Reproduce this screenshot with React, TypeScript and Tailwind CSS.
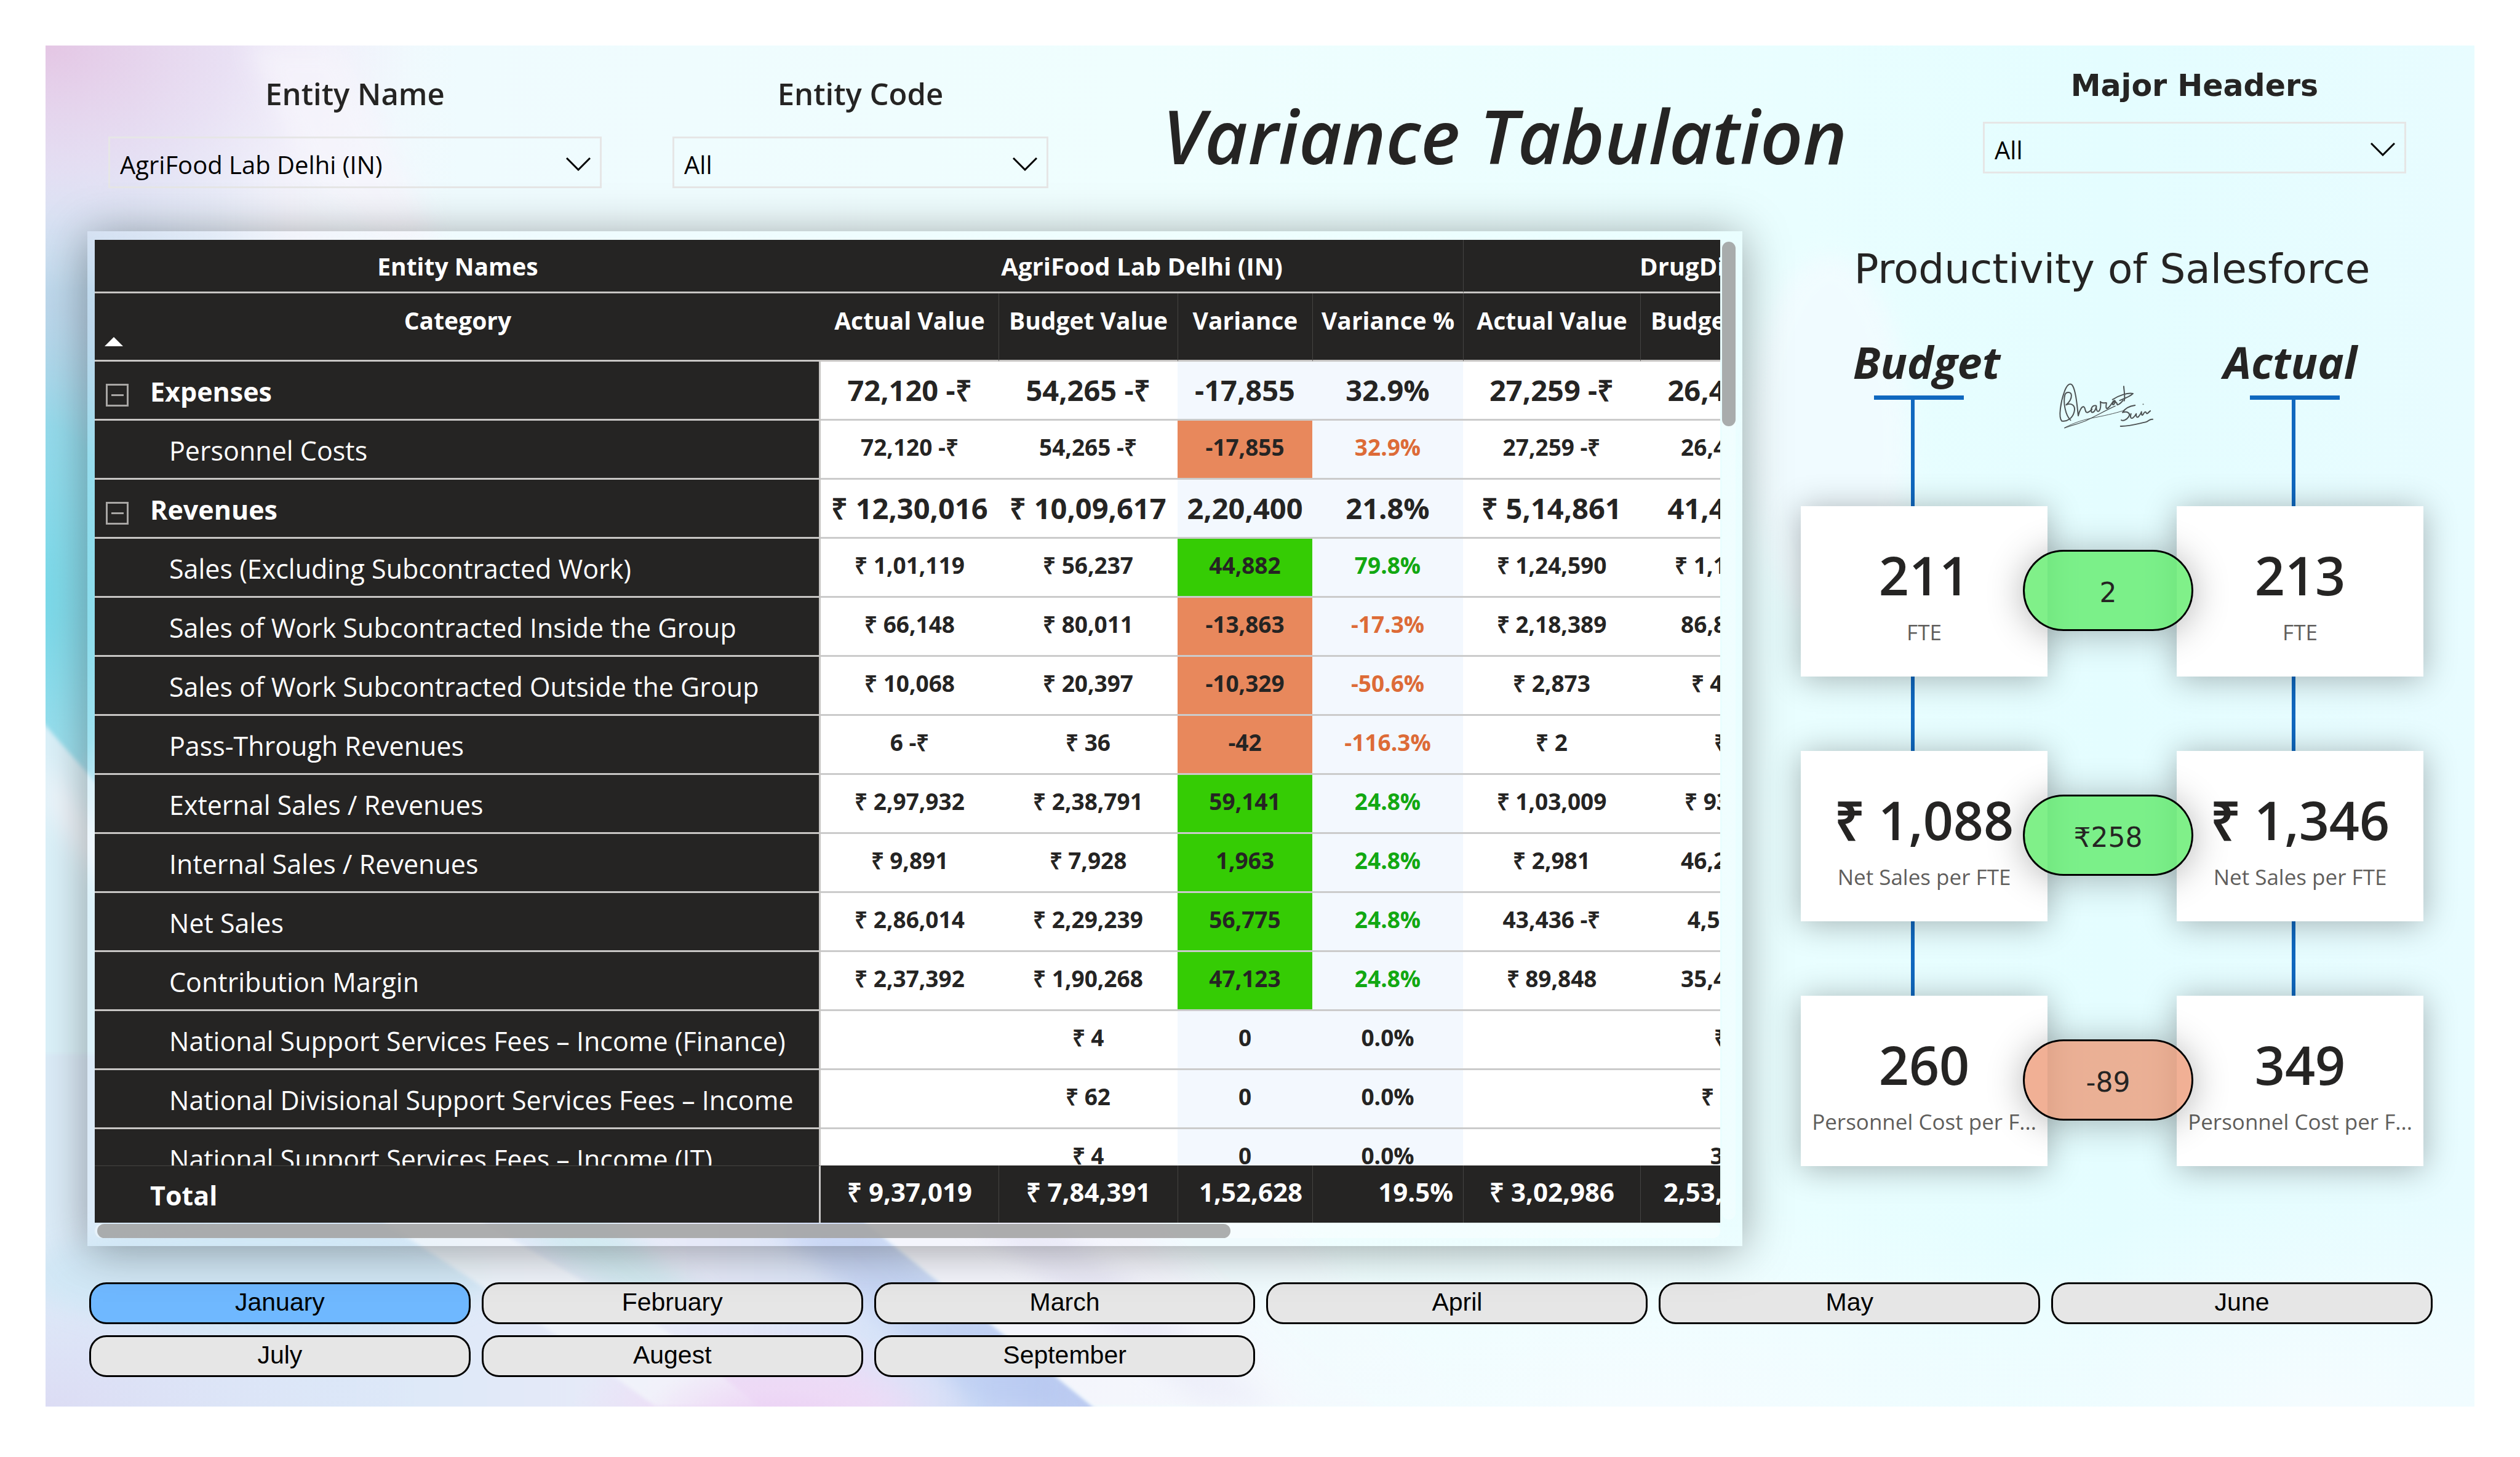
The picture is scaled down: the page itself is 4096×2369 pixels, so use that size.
import { useState } from "react";
import { clsx } from "clsx";

type Row = {
  name: string;
  group?: boolean;
  cells: string[];
  tone?: "good" | "bad";
};

const rows: Row[] = [
  { name: "Expenses", group: true, cells: ["72,120 -₹", "54,265 -₹", "-17,855", "32.9%", "27,259 -₹", "26,462 -₹"] },
  { name: "Personnel Costs", cells: ["72,120 -₹", "54,265 -₹", "-17,855", "32.9%", "27,259 -₹", "26,462 -₹"], tone: "bad" },
  { name: "Revenues", group: true, cells: ["₹ 12,30,016", "₹ 10,09,617", "2,20,400", "21.8%", "₹ 5,14,861", "41,462 -₹"] },
  { name: "Sales (Excluding Subcontracted Work)", cells: ["₹ 1,01,119", "₹ 56,237", "44,882", "79.8%", "₹ 1,24,590", "₹ 1,10,462"], tone: "good" },
  { name: "Sales of Work Subcontracted Inside the Group", cells: ["₹ 66,148", "₹ 80,011", "-13,863", "-17.3%", "₹ 2,18,389", "86,862 -₹"], tone: "bad" },
  { name: "Sales of Work Subcontracted Outside the Group", cells: ["₹ 10,068", "₹ 20,397", "-10,329", "-50.6%", "₹ 2,873", "₹ 4,162"], tone: "bad" },
  { name: "Pass-Through Revenues", cells: ["6 -₹", "₹ 36", "-42", "-116.3%", "₹ 2", "₹ 4"], tone: "bad" },
  { name: "External Sales / Revenues", cells: ["₹ 2,97,932", "₹ 2,38,791", "59,141", "24.8%", "₹ 1,03,009", "₹ 93,162"], tone: "good" },
  { name: "Internal Sales / Revenues", cells: ["₹ 9,891", "₹ 7,928", "1,963", "24.8%", "₹ 2,981", "46,262 -₹"], tone: "good" },
  { name: "Net Sales", cells: ["₹ 2,86,014", "₹ 2,29,239", "56,775", "24.8%", "43,436 -₹", "4,562 -₹"], tone: "good" },
  { name: "Contribution Margin", cells: ["₹ 2,37,392", "₹ 1,90,268", "47,123", "24.8%", "₹ 89,848", "35,462 -₹"], tone: "good" },
  { name: "National Support Services Fees – Income (Finance)", cells: ["", "₹ 4", "0", "0.0%", "", "₹ 4"] },
  { name: "National Divisional Support Services Fees – Income", cells: ["", "₹ 62", "0", "0.0%", "", "₹ 236"] },
  { name: "National Support Services Fees – Income (IT)", cells: ["", "₹ 4", "0", "0.0%", "", "3 -₹"] },
];

const totals = ["₹ 9,37,019", "₹ 7,84,391", "1,52,628", "19.5%", "₹ 3,02,986", "2,53,462 -₹"];
const columns = ["Actual Value", "Budget Value", "Variance", "Variance %", "Actual Value", "Budget Value"];
const months = ["January", "February", "March", "April", "May", "June", "July", "Augest", "September"];

const metrics = [
  { label: "FTE", budget: "211", actual: "213", diff: "2", good: true },
  { label: "Net Sales per FTE", budget: "₹ 1,088", actual: "₹ 1,346", diff: "₹258", good: true },
  { label: "Personnel Cost per F...", budget: "260", actual: "349", diff: "-89", good: false },
];

function Wallpaper() {
  return (
    <svg aria-hidden="true" className="absolute inset-0 h-full w-full" viewBox="0 0 3948 2213" preserveAspectRatio="none">
      <defs>
        <linearGradient id="base" x1="0" y1="0" x2="1" y2="0">
          <stop offset="0" stopColor="#dcecf8" />
          <stop offset="0.1" stopColor="#f3f4fb" />
          <stop offset="0.17" stopColor="#effbfe" />
          <stop offset="0.45" stopColor="#effefe" />
          <stop offset="0.72" stopColor="#e9feff" />
          <stop offset="0.85" stopColor="#e4fdff" />
          <stop offset="1" stopColor="#e8fcff" />
        </linearGradient>
        <radialGradient id="pink">
          <stop offset="0" stopColor="#e4c6e4" />
          <stop offset="0.5" stopColor="#e8dcf2" stopOpacity="0.8" />
          <stop offset="1" stopColor="#f0ecfa" stopOpacity="0" />
        </radialGradient>
        <radialGradient id="steel">
          <stop offset="0" stopColor="#abcbe4" />
          <stop offset="0.5" stopColor="#bcd8ec" stopOpacity="0.7" />
          <stop offset="1" stopColor="#dcecf8" stopOpacity="0" />
        </radialGradient>
        <radialGradient id="cyan">
          <stop offset="0" stopColor="#76daea" />
          <stop offset="0.6" stopColor="#90dfee" stopOpacity="0.8" />
          <stop offset="1" stopColor="#b8e6f4" stopOpacity="0" />
        </radialGradient>
        <radialGradient id="pale">
          <stop offset="0" stopColor="#f5fcff" />
          <stop offset="1" stopColor="#f5fcff" stopOpacity="0" />
        </radialGradient>
        <radialGradient id="lavender">
          <stop offset="0" stopColor="#dcdcf4" />
          <stop offset="1" stopColor="#dfe4f8" stopOpacity="0" />
        </radialGradient>
        <radialGradient id="orchid">
          <stop offset="0" stopColor="#ebcff4" />
          <stop offset="0.5" stopColor="#eedaf6" stopOpacity="0.8" />
          <stop offset="1" stopColor="#eedcf6" stopOpacity="0" />
        </radialGradient>
        <linearGradient id="lower" x1="0" y1="0" x2="1" y2="0">
          <stop offset="0" stopColor="#dcecf8" />
          <stop offset="0.3" stopColor="#dbe8f8" />
          <stop offset="0.6" stopColor="#e8eaf8" />
          <stop offset="0.85" stopColor="#d4e2f8" />
          <stop offset="1" stopColor="#b6c6f0" />
        </linearGradient>
        <filter id="soft" x="-20%" y="-20%" width="140%" height="140%">
          <feGaussianBlur stdDeviation="18" />
        </filter>
        <filter id="edge" x="-5%" y="-5%" width="110%" height="110%">
          <feGaussianBlur stdDeviation="3" />
        </filter>
      </defs>
      <rect width="3948" height="2213" fill="url(#base)" />
      <ellipse cx="0" cy="620" rx="480" ry="640" fill="url(#steel)" />
      <ellipse cx="-20" cy="900" rx="260" ry="480" fill="url(#cyan)" />
      <ellipse cx="0" cy="0" rx="600" ry="400" fill="url(#pink)" />
      <path d="M330 0 L480 0 L640 330 L560 330 L420 200 Z" fill="#f7f5fc" opacity="0.7" filter="url(#soft)" />
      <path d="M-40 1060 L240 1380 L240 1800 L-40 1800 Z" fill="#dcf2fa" filter="url(#edge)" />
      <path d="M0 1160 L200 1420 L200 1520 L0 1240 Z" fill="#f1f7fd" filter="url(#soft)" />
      <path d="M-40 1640 L1000 1640 L1338 1917 L1704 2213 L1704 2260 L-40 2260 Z" fill="url(#lower)" filter="url(#edge)" />
      <ellipse cx="0" cy="2213" rx="620" ry="300" fill="url(#lavender)" />
      <ellipse cx="350" cy="2000" rx="380" ry="90" fill="#cfe7f5" opacity="0.8" filter="url(#soft)" />
      <path d="M740 1900 L900 1900 L1080 2040 L960 2060 Z" fill="#cfeaf0" opacity="0.8" filter="url(#soft)" />
      <path d="M1180 1917 L1338 1917 L1704 2213 L1520 2213 Z" fill="#aec1ef" opacity="0.4" filter="url(#soft)" />
      <ellipse cx="1180" cy="2230" rx="330" ry="150" fill="url(#orchid)" />
      <path d="M530 1900 L690 1900 L1005 2087 L1160 2213 L992 2213 L816 2087 Z" fill="#f3f7fb" opacity="0.75" filter="url(#edge)" />
      <ellipse cx="1200" cy="2240" rx="240" ry="110" fill="url(#orchid)" />
      <path d="M1313 1897 L1800 1897 L2160 2213 L1704 2213 Z" fill="#f4f5fc" filter="url(#edge)" />
      <path d="M1490 1897 L1620 1897 L2000 2213 L1880 2213 Z" fill="#e7e6f6" opacity="0.7" filter="url(#soft)" />
      <path d="M1740 1880 L2000 1880 L2300 2213 L2060 2213 Z" fill="#f1fbfe" opacity="0.8" filter="url(#soft)" />
      <ellipse cx="2600" cy="2213" rx="1000" ry="330" fill="url(#pale)" />
      <ellipse cx="3700" cy="2213" rx="700" ry="330" fill="url(#pale)" />
      <ellipse cx="2900" cy="640" rx="130" ry="300" fill="#f4fbff" opacity="0.7" filter="url(#soft)" />
    </svg>
  );
}

function Slicer({ id, label, options, verdana }: { id: string; label: string; options: string[]; verdana?: boolean }) {
  return (
    <div className="flex flex-col text-center text-[#252423]">
      <label
        htmlFor={id}
        className={clsx(
          "leading-[60px]",
          verdana ? "font-['DejaVu_Sans',sans-serif] text-[49px] font-bold" : "text-[49px] font-semibold",
        )}
      >
        {label}
      </label>
      <div className={clsx("relative", verdana ? "mt-7" : "mt-10")}>
        <select
          id={id}
          className="h-[84px] w-full appearance-none border-[3px] border-[#e6e6e6] bg-transparent pt-2 pr-20 pl-4 text-[40px] text-black outline-none"
        >
          {options.map((o) => (
            <option key={o}>{o}</option>
          ))}
        </select>
        <svg aria-hidden="true" viewBox="0 0 40 22" className="pointer-events-none absolute top-[34px] right-[18px] h-[22px] w-10">
          <path d="M1 1 L20 20 L39 1" fill="none" stroke="#000" strokeWidth="3" />
        </svg>
      </div>
    </div>
  );
}

function VarianceTable() {
  return (
    <div className="h-[1598px] overflow-hidden">
      <table className="w-[2803px] table-fixed border-separate border-spacing-0 text-[#252423]">
        <colgroup>
          <col className="w-[1180px]" />
          <col className="w-[289px]" />
          <col className="w-[291px]" />
          <col className="w-[219px]" />
          <col className="w-[245px]" />
          <col className="w-[288px]" />
          <col className="w-[291px]" />
        </colgroup>
        <thead className="bg-[#252423] text-[39px] leading-[52px] font-bold text-white">
          <tr className="h-[87px]">
            <th scope="col" className="border-b-[3px] border-[#c8c6c4] p-0 pt-[2px]">Entity Names</th>
            <th scope="colgroup" colSpan={4} className="border-b-[3px] border-[#c8c6c4] p-0 pt-[2px] text-[40px]">AgriFood Lab Delhi (IN)</th>
            <th scope="colgroup" colSpan={2} className="border-b-[3px] border-l border-b-[#c8c6c4] border-l-[#454442] p-0 pt-[2px] pl-[286px] text-left text-[40px] whitespace-nowrap">DrugDiscovery</th>
          </tr>
          <tr className="h-[111px]">
            <th scope="col" aria-sort="ascending" className="relative border-b-[3px] border-[#c8c6c4] p-0 pt-[18px] align-top">
              Category
              <svg aria-hidden="true" viewBox="0 0 30 15" className="absolute bottom-[22px] left-4 h-[15px] w-[30px]">
                <path d="M15 0 L30 15 H0 Z" fill="#fff" />
              </svg>
            </th>
            {columns.map((c, i) => (
              <th
                key={i}
                scope="col"
                className={clsx(
                  "border-b-[3px] border-b-[#c8c6c4] p-0 pt-[18px] align-top whitespace-nowrap",
                  i > 0 && "border-l border-l-[#454442]",
                )}
              >
                {c}
              </th>
            ))}
          </tr>
        </thead>
        <tbody>
          {rows.map((r) => (
            <tr key={r.name} className="h-24">
              <th
                scope="row"
                className={clsx(
                  "border-r-[3px] border-b-[3px] border-[#c8c6c4] bg-[#252423] p-0 pt-1 text-left text-[43px] leading-[60px] whitespace-nowrap text-white",
                  r.group ? "font-bold" : "pl-[121px] font-normal",
                )}
              >
                {r.group ? (
                  <span className="flex items-center">
                    <button
                      type="button"
                      aria-label={"Collapse " + r.name}
                      className="mt-3 mr-[35px] ml-[18px] flex size-[37px] items-center justify-center border-[3px] border-[#a8a6a4]"
                    >
                      <span className="h-[3px] w-5 bg-[#a8a6a4]" />
                    </button>
                    {r.name}
                  </span>
                ) : (
                  r.name
                )}
              </th>
              {r.cells.map((v, i) => (
                <td
                  key={i}
                  className={clsx(
                    "border-b-[3px] border-[#cbcbcb] p-0 text-center font-bold whitespace-nowrap",
                    r.group ? "text-[47px]" : "pb-[7px] text-[37px]",
                    i === 2 && r.tone === "good" && "bg-[#35cc04]",
                    i === 2 && r.tone === "bad" && "bg-[#e8885c]",
                    i === 2 && !r.tone && "bg-[#f3f8fe]",
                    i === 3 && "bg-[#f3f8fe]",
                    i === 3 && r.tone === "good" && "text-[#12a812]",
                    i === 3 && r.tone === "bad" && "text-[#dd6b37]",
                    i !== 2 && i !== 3 && "bg-white",
                  )}
                >
                  {v}
                </td>
              ))}
            </tr>
          ))}
        </tbody>
        <tfoot className="text-white">
          <tr className="h-[93px]">
            <th scope="row" className="sticky bottom-0 border-t border-r-[3px] border-t-[#454442] border-r-[#c8c6c4] bg-[#252423] p-0 pt-1 pl-[90px] text-left text-[43px] leading-[60px] font-bold">
              Total
            </th>
            {totals.map((v, i) => (
              <td
                key={i}
                className={clsx(
                  "sticky bottom-0 bg-[#252423] p-0 pb-[9px] text-[42px] font-bold whitespace-nowrap",
                  i > 0 && "border-l border-l-[#454442]",
                  i === 2 || i === 3 ? "pr-4 text-right" : "text-center",
                )}
              >
                {v}
              </td>
            ))}
          </tr>
        </tfoot>
      </table>
    </div>
  );
}

function Signature() {
  return (
    <svg role="img" aria-label="Signature" viewBox="0 0 570 330" className="h-[108px] w-[187px]" fill="none" stroke="#4c5152" strokeLinecap="round" strokeLinejoin="round">
      <g strokeWidth="6">
        <path d="M114 254 C88 230 76 165 86 128 C92 112 116 112 118 130 C119 152 104 168 92 178 C120 166 140 182 132 212 C124 244 96 264 70 258 C52 240 66 160 82 116 C94 80 110 66 122 80 C140 106 146 178 152 232 C158 206 170 184 180 188 C190 196 184 216 196 216 C206 214 214 206 220 200" />
        <path d="M240 182 C222 178 212 198 218 214 C230 220 240 200 242 184 C240 202 246 216 256 208 C264 196 264 176 262 162 C268 172 284 168 292 168 C290 184 288 196 296 196 C306 192 316 176 326 160 C334 152 340 160 332 172 C324 182 320 176 326 166 C334 158 344 164 346 178 C358 176 366 166 374 156" />
        <path d="M378 86 C380 116 386 140 380 158 M322 152 C352 132 398 116 424 122 C412 136 384 146 358 156" />
        <path d="M434 180 C406 184 382 198 372 216 C396 208 414 220 402 238 C392 252 376 260 366 254 M414 222 C408 240 414 250 424 242 C432 236 438 226 440 222 C438 238 444 244 452 236 C460 226 464 220 466 212 C466 228 468 234 474 226 C480 214 486 208 490 218 C494 228 500 214 510 208" />
        <path d="M362 284 C400 286 440 274 486 264 C504 260 506 246 522 250" />
      </g>
      <path d="M84 293 C130 276 170 268 200 252 C260 222 300 200 336 184" strokeWidth="4" />
      <path d="M84 292 C130 266 190 248 240 240 C300 228 350 216 384 204" strokeWidth="3" />
      <circle cx="474" cy="175" r="2" strokeWidth="2" />
    </svg>
  );
}

function Card({ value, label }: { value: string; label: string }) {
  return (
    <div className="flex h-[277px] flex-col items-center bg-white pt-[52px] shadow-[0_4px_50px_rgba(0,0,0,0.3)]">
      <div className="text-[86px] leading-[120px] font-semibold whitespace-nowrap text-[#252423]">{value}</div>
      <div className="mt-2 text-center text-[35px] leading-[50px] whitespace-nowrap text-[#605e5c]">{label}</div>
    </div>
  );
}

function Stem({ side, long }: { side: "budget" | "actual"; long?: boolean }) {
  return (
    <div
      className={clsx(
        "w-[6px] bg-[#1068bf]",
        side === "budget" ? "ml-[179px]" : "ml-[187px]",
        long ? "h-[173px]" : "h-[121px]",
      )}
    />
  );
}

function Productivity() {
  return (
    <section className="pt-[22px] text-[#252423]">
      <h2 className="text-center font-['DejaVu_Sans',sans-serif] text-[66px] leading-[80px]">Productivity of Salesforce</h2>
      <div className="mt-[65px] grid grid-cols-[minmax(0,401fr)_minmax(0,210fr)_minmax(0,401fr)]">
        <div>
          <h3 className="pl-2 text-center text-[72px] leading-[90px] font-bold italic">Budget</h3>
          <div className="mt-[10px] ml-[119px] h-[7px] w-[146px] bg-[#1068bf]" />
          <Stem side="budget" long />
        </div>
        <div className="pt-[57px]">
          <Signature />
        </div>
        <div>
          <h3 className="pr-8 text-center text-[72px] leading-[90px] font-bold italic">Actual</h3>
          <div className="mt-[10px] ml-[119px] h-[7px] w-[146px] bg-[#1068bf]" />
          <Stem side="actual" long />
        </div>
      </div>
      {metrics.map((m, i) => (
        <div key={m.label}>
          {i > 0 && (
            <div className="grid grid-cols-[minmax(0,401fr)_minmax(0,210fr)_minmax(0,401fr)]">
              <Stem side="budget" />
              <span />
              <Stem side="actual" />
            </div>
          )}
          <div className="relative grid grid-cols-[minmax(0,401fr)_minmax(0,210fr)_minmax(0,401fr)]">
            <Card value={m.budget} label={m.label} />
            <span />
            <Card value={m.actual} label={m.label} />
            <div
              className={clsx(
                "absolute top-[71px] left-[361px] flex h-[132px] w-[277px] items-center justify-center rounded-full border-[3px] border-black pt-2 font-['DejaVu_Sans',sans-serif] text-[44px] shadow-[0_4px_60px_rgba(0,0,0,0.3)]",
                m.good ? "bg-[#60ec6c]/80" : "bg-[#ec9672]/75",
              )}
            >
              {m.diff}
            </div>
          </div>
        </div>
      ))}
    </section>
  );
}

export default function App() {
  const [month, setMonth] = useState("January");
  return (
    <div className="min-h-screen bg-white px-[74px] pt-[74px] pb-[82px] font-['Open_Sans',sans-serif]">
      <main className="relative isolate overflow-hidden pb-12">
        <Wallpaper />
        <div className="relative">
          <header className="grid h-[302px] grid-cols-[minmax(0,802fr)_minmax(0,611fr)_minmax(0,1289fr)_minmax(0,688fr)] gap-x-[115px] pr-[111px] pl-[102px]">
            <div className="pt-12">
              <Slicer id="entity-name" label="Entity Name" options={["AgriFood Lab Delhi (IN)"]} />
            </div>
            <div className="pt-12">
              <Slicer id="entity-code" label="Entity Code" options={["All"]} />
            </div>
            <h1 className="pt-[66px] pr-9 text-center text-[121px] leading-[160px] font-semibold whitespace-nowrap text-[#252423] italic">
              Variance Tabulation
            </h1>
            <div className="pt-9">
              <Slicer id="major-headers" label="Major Headers" options={["All"]} verdana />
            </div>
          </header>

          <div className="grid grid-cols-[minmax(0,2690fr)_minmax(0,1012fr)] gap-x-[95px] pr-[83px] pl-[68px]">
            <section className="relative h-[1650px] pt-[14px] pr-9 pl-3 shadow-[0_6px_70px_rgba(0,0,0,0.36)]">
              <VarianceTable />
              <div className="mt-[2px] h-[23px] rounded-full bg-white/40">
                <div className="ml-1 h-full w-[1842px] rounded-full bg-[#9a9a9a]/80" />
              </div>
              <div className="absolute top-[17px] right-[11px] h-[1590px] w-[22px] rounded-full bg-white/30">
                <div className="h-[300px] rounded-full bg-[#a0a3a3]/90" />
              </div>
            </section>
            <Productivity />
          </div>

          <div className="mt-[59px] grid grid-cols-6 gap-[18px] pr-[68px] pl-[71px]">
            {months.map((m) => (
              <button
                key={m}
                type="button"
                aria-pressed={m === month}
                onClick={() => setMonth(m)}
                className={clsx(
                  "h-[68px] rounded-[28px] border-[3px] border-black pb-1 font-['Liberation_Sans',sans-serif] text-[41px] leading-[56px] text-black",
                  m === month ? "bg-[#6fb8ff]" : "bg-[#e6e6e6]",
                )}
              >
                {m}
              </button>
            ))}
          </div>
        </div>
      </main>
    </div>
  );
}
